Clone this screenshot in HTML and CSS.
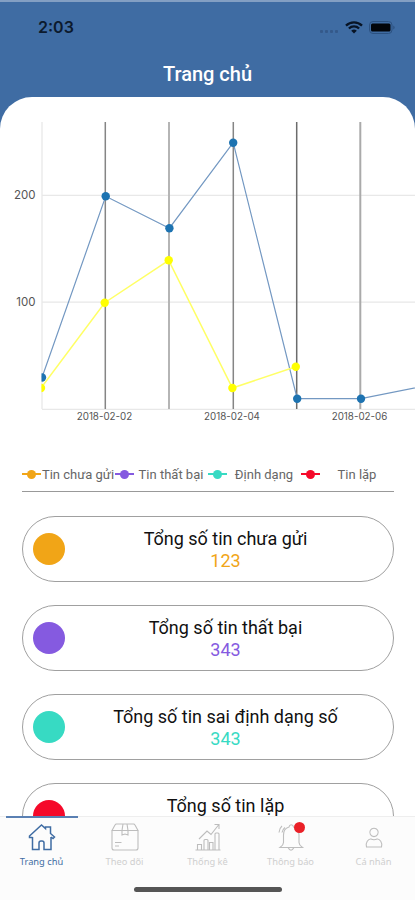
FILE: index.html
```html
<!DOCTYPE html>
<html lang="vi">
<head>
    <meta charset="UTF-8">
    <meta name="viewport" content="width=device-width, initial-scale=1.0">
    <title>Trang chủ</title>
    <link rel="stylesheet" href="styles.css">
</head>
<body>
    <div class="app">
        <header class="header">
            <div class="status-bar">
                <span class="time">2:03</span>
                <div class="status-icons">
                    <svg class="signal" width="19" height="3" viewBox="0 0 19 3">
                        <rect x="0" y="0" width="3" height="3" rx="1"/>
                        <rect x="5" y="0" width="3" height="3" rx="1"/>
                        <rect x="10" y="0" width="3" height="3" rx="1"/>
                        <rect x="15" y="0" width="3" height="3" rx="1"/>
                    </svg>
                    <svg class="wifi" width="18" height="13" viewBox="0 0 18 13">
                        <path d="M1 4.6a11.4 11.4 0 0 1 16 0M3.9 7.5a7.2 7.2 0 0 1 10.2 0" fill="none" stroke="#081425" stroke-width="2.3"/>
                        <path d="M9 12.5L6.2 9.8a4 4 0 0 1 5.6 0z" fill="#081425"/>
                    </svg>
                    <svg class="battery" width="27" height="13" viewBox="0 0 27 13">
                        <rect x=".5" y=".5" width="22.5" height="12" rx="3.5" fill="none" stroke="#2c5180"/>
                        <rect x="2" y="2.5" width="19.5" height="8" rx="1.5" fill="#02050a"/>
                        <path d="M24.3 4.5v4a2.2 2.2 0 0 0 0-4z" fill="#2c5180"/>
                    </svg>
                </div>
            </div>
            <h1>Trang chủ</h1>
        </header>

        <main class="sheet">
            <svg class="chart" width="415" height="330" viewBox="0 97 415 330">
                <defs>
                    <clipPath id="plot"><rect x="41.5" y="120" width="374" height="295"/></clipPath>
                </defs>
                <g class="grid">
                    <path d="M42 195.3H415M42 302.2H415M42 409.3H415"/>
                    <path d="M42 122V409"/>
                </g>
                <g class="bars">
                    <path d="M105.3 122V409"/>
                    <path class="soft" d="M169 122V409"/>
                    <path d="M233.3 122V409"/>
                    <path class="dark" d="M296.7 122V409"/>
                    <path class="mid" d="M360.3 122V409"/>
                </g>
                <g clip-path="url(#plot)">
                    <g class="series-blue">
                        <polyline points="42,377.5 105.7,196.3 169.4,228.2 233.2,142.7 297.2,398.7 361,398.7 424,386"/>
                        <circle cx="42" cy="377.5" r="4.2"/>
                        <circle cx="105.7" cy="196.3" r="4.2"/>
                        <circle cx="169.4" cy="228.2" r="4.2"/>
                        <circle cx="233.2" cy="142.7" r="4.2"/>
                        <circle cx="297.2" cy="398.7" r="4.2"/>
                        <circle cx="361" cy="398.7" r="4.2"/>
                    </g>
                    <g class="series-yellow">
                        <polyline points="41,388 104.7,302.7 168.7,260.3 232.4,388 295.8,366.8"/>
                        <circle cx="41" cy="388" r="4.2"/>
                        <circle cx="104.7" cy="302.7" r="4.2"/>
                        <circle cx="168.7" cy="260.3" r="4.2"/>
                        <circle cx="232.4" cy="388" r="4.2"/>
                        <circle cx="295.8" cy="366.8" r="4.2"/>
                    </g>
                </g>
                <g class="axis-y">
                    <text x="35.5" y="199">200</text>
                    <text x="35.5" y="305.5">100</text>
                </g>
                <g class="axis-x">
                    <text x="104.5" y="419.5">2018-02-02</text>
                    <text x="232" y="419.5">2018-02-04</text>
                    <text x="359.5" y="419.5">2018-02-06</text>
                </g>
            </svg>

            <ul class="legend">
                <li class="orange"><i></i><span>Tin chưa gửi</span></li>
                <li class="purple"><i></i><span>Tin thất bại</span></li>
                <li class="teal"><i></i><span>Định dạng</span></li>
                <li class="red"><i></i><span>Tin lặp</span></li>
            </ul>

            <div class="cards">
                <div class="card orange">
                    <span class="dot"></span>
                    <div class="card-text"><h2>Tổng số tin chưa gửi</h2><p>123</p></div>
                </div>
                <div class="card purple">
                    <span class="dot"></span>
                    <div class="card-text"><h2>Tổng số tin thất bại</h2><p>343</p></div>
                </div>
                <div class="card teal">
                    <span class="dot"></span>
                    <div class="card-text"><h2>Tổng số tin sai định dạng số</h2><p>343</p></div>
                </div>
                <div class="card red">
                    <span class="dot"></span>
                    <div class="card-text"><h2>Tổng số tin lặp</h2></div>
                </div>
            </div>
        </main>

        <nav class="tabbar">
            <div class="tabs">
                <a class="tab active">
                    <svg width="30" height="30" viewBox="0 0 30 30">
                        <path d="M5.5 15v12.5h6.500V21q0-2 2-2h1q2 0 2 2v6.500h7V15M5.500 15.500L2.500 15.500v-1.500L14.500 3l4 3.500V5h5v6.500l4 3.500-1.500 1.500-2-1.500"/>
                    </svg>
                    <span>Trang chủ</span>
                </a>
                <a class="tab">
                    <svg width="30" height="30" viewBox="0 0 30 30">
                        <path d="M2 8.500v17.500q0 2 2 2h22q2 0 2-2V8.500M2 8.500L5 3q.5-1 1.500-1h17q1 0 1.500 1l3 5.500zM12 8.500V13l3-1 3 1V8.500L17 2h-4zM5 20.500h6.500M5 24h4"/>
                    </svg>
                    <span>Theo dõi</span>
                </a>
                <a class="tab">
                    <svg width="30" height="30" viewBox="0 0 30 30">
                        <path d="M2.500 28H27.500M4.500 28v-5.500h4V28M11 28V18.500q0-1 1-1h2q1 0 1 1V28M16.500 28v-7.500h3.500V28M22 28V12q0-1 1-1h2q1 0 1 1v16M6 17L14 9l4 3.500L25.500 3M21.500 2.500h4.500V7"/>
                    </svg>
                    <span>Thống kê</span>
                </a>
                <a class="tab">
                    <svg width="30" height="30" viewBox="0 0 30 30">
                        <path d="M4 25.500h22.500c-2-1.500-3.500-2.500-3.500-5V13c0-4-2-7-5.500-8-.5-3-4-3-4.500 0C9.500 6 7.500 9 7.500 13v7.500c0 2.500-1.500 3.500-3.500 5zM12 25.500q3 5.500 6 0M6 4Q3.500 6 3 10.500M9 5.500Q6.500 7.500 6 10.500"/>
                    </svg>
                    <b class="badge"></b>
                    <span>Thông báo</span>
                </a>
                <a class="tab">
                    <svg width="30" height="30" viewBox="0 0 30 30">
                        <path d="M15 6.200a4.200 4.200 0 1 0 .01 0zM7.500 25c-1.500-4 2-8.500 4.500-8q3 1.500 6 0c2.500-.5 6 4 4.500 8z"/>
                    </svg>
                    <span>Cá nhân</span>
                </a>
            </div>
            <div class="home-indicator"></div>
        </nav>
    </div>
</body>
</html>
```

FILE: styles.css
```css
* {
    box-sizing: border-box;
    margin: 0;
    padding: 0;
}
body {
    font-family: Roboto, "Liberation Sans", sans-serif;
    background: #3f6ca3;
}
.app {
    display: flex;
    flex-direction: column;
    width: 415px;
    height: 900px;
    overflow: hidden;
    background: #3f6ca3;
    border-top: 2px solid #839fc3;
}
.header {
    flex: none;
    height: 95px;
    color: #fff;
}
.status-bar {
    display: flex;
    justify-content: space-between;
    align-items: center;
    height: 50px;
    padding: 0 19px 0 38px;
}
.time {
    font-family: Inter, sans-serif;
    font-size: 16px;
    font-weight: 600;
    color: #0c1a2d;
}
.status-icons {
    display: flex;
    align-items: center;
}
.signal {
    fill: #34598a;
    margin: 9px 6px 0 0;
}
.wifi {
    margin-right: 6px;
}
.header h1 {
    padding-top: 10px;
    font-size: 20px;
    font-weight: 500;
    line-height: 24px;
    text-align: center;
}
.sheet {
    flex: 1;
    min-height: 0;
    overflow: hidden;
    background: #fff;
    border-radius: 32px 32px 0 0;
}
.chart {
    display: block;
}
.grid path {
    fill: none;
    stroke: #e8e8e8;
    stroke-width: 1.3;
}
.bars path {
    stroke: #858585;
    stroke-width: 1.5;
}
.bars .soft {
    stroke: #b5b5b5;
    stroke-width: 2;
}
.bars .mid {
    stroke: #aaa;
    stroke-width: 2;
}
.bars .dark {
    stroke: #6c6c6c;
}
.series-blue polyline,
.series-yellow polyline {
    fill: none;
    stroke: #7398c2;
    stroke-width: 1.2;
}
.series-blue circle {
    fill: #1d73b1;
}
.series-yellow polyline {
    stroke: #ffff66;
    stroke-width: 1.5;
}
.series-yellow circle {
    fill: #ffff00;
}
.axis-y text,
.axis-x text {
    font-family: Inter, sans-serif;
    fill: #555;
}
.axis-y text {
    font-size: 11.5px;
    text-anchor: end;
}
.axis-x text {
    font-size: 9.8px;
    text-anchor: middle;
}
.legend {
    display: grid;
    grid-template-columns: 93px 93px 93px 93px;
    width: 372px;
    height: 65px;
    margin: 0 0 24px 22px;
    padding-top: 37px;
    list-style: none;
    border-bottom: 1px solid #999;
}
.legend li {
    display: flex;
    align-items: center;
    height: 20px;
}
.legend i {
    display: flex;
    align-items: center;
    justify-content: center;
    flex: none;
    width: 19px;
    height: 2px;
    background: var(--color);
}
.legend i::before {
    content: "";
    flex: none;
    width: 9px;
    height: 9px;
    border-radius: 50%;
    background: var(--color);
}
.legend span {
    flex: 1;
    font-size: 13px;
    color: #666;
    text-align: center;
    white-space: nowrap;
}
.orange {
    --color: #f1a517;
}
.purple {
    --color: #855ae0;
}
.teal {
    --color: #37dac3;
}
.red {
    --color: #f5092a;
}
.cards {
    display: flex;
    flex-direction: column;
    gap: 23px;
    padding: 0 21px 0 22px;
}
.card {
    display: flex;
    align-items: center;
    flex: none;
    height: 66px;
    padding: 0 9px 0 10px;
    border: 1px solid #a0a0a0;
    border-radius: 33px;
}
.dot {
    flex: none;
    width: 32px;
    height: 32px;
    border-radius: 50%;
    background: var(--color);
}
.card-text {
    flex: 1;
    height: 44px;
    padding: 1px 0 0 2px;
    text-align: center;
}
.card h2,
.card p {
    font-size: 18px;
    font-weight: 400;
    line-height: 22px;
}
.card h2 {
    color: #111;
}
.card p {
    color: var(--color);
}
.tabbar {
    flex: none;
    height: 84px;
    background: #fcfcfc;
    border-top: 1px solid #eee;
}
.tabs {
    display: flex;
    height: 67px;
}
.tab {
    display: flex;
    flex-direction: column;
    align-items: center;
    flex: 1;
    position: relative;
    padding-top: 5px;
    font-family: "Noto Sans", sans-serif;
    font-size: 9.3px;
    line-height: 14px;
    color: #cfcfcf;
}
.tab svg {
    fill: none;
    stroke: #bdbdbd;
    stroke-width: 1.1;
    margin-bottom: 3px;
}
.tab.active {
    color: #3f6ca3;
}
.tab.active svg {
    stroke: #3f6ca3;
    stroke-width: 1.5;
}
.tab.active::before {
    content: "";
    position: absolute;
    top: -1px;
    left: 6px;
    width: 72px;
    height: 2px;
    background: #5a80b3;
}
.badge {
    position: absolute;
    top: 5px;
    left: 45px;
    width: 11px;
    height: 11px;
    border-radius: 50%;
    background: #ea2027;
}
.home-indicator {
    width: 148px;
    height: 5px;
    margin: 3px auto 0;
    border-radius: 3px;
    background: #555;
}
```
